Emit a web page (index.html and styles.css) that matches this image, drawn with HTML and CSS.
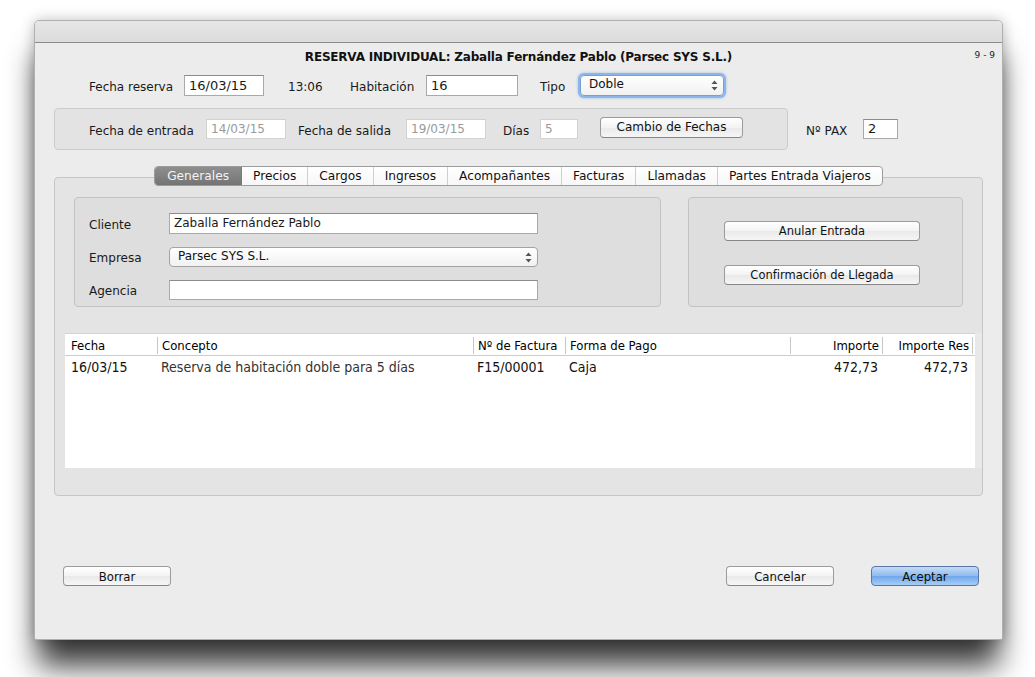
FILE: index.html
```html
<!DOCTYPE html>
<html lang="es">
<head>
<meta charset="utf-8">
<title>Reserva individual</title>
<link rel="stylesheet" href="styles.css">
</head>
<body>
<div class="window">
  <div class="titlebar"></div>
  <div class="title-row">
    <span></span>
    <h1 class="title">RESERVA INDIVIDUAL: Zaballa Fernández Pablo (Parsec SYS S.L.)</h1>
    <span class="pager">9 - 9</span>
  </div>
  <div class="body">
    <div class="row row1">
      <span class="lbl w95">Fecha reserva</span>
      <div class="field w80">16/03/15</div>
      <span class="lbl time w62">13:06</span>
      <span class="lbl w76">Habitación</span>
      <div class="field w92">16</div>
      <span class="lbl tipo w40">Tipo</span>
      <div class="popup focus w144"><span class="ptext">Doble</span><svg class="arrows" width="7" height="11" viewBox="0 0 7 11"><path d="M3.5 0.5 L6.5 4 L0.5 4 Z M3.5 10.5 L6.5 7 L0.5 7 Z" fill="#555"/></svg></div>
    </div>

    <div class="row row2">
      <div class="group dates">
        <span class="lbl w117">Fecha de entrada</span>
        <div class="field disabled w80">14/03/15</div>
        <span class="lbl gap12 w108">Fecha de salida</span>
        <div class="field disabled w80">19/03/15</div>
        <span class="lbl gap17 w37">Días</span>
        <div class="field disabled w38">5</div>
        <button class="btn cambio">Cambio de Fechas</button>
      </div>
      <span class="lbl pax w57">Nº PAX</span>
      <div class="field w35">2</div>
    </div>

    <div class="tabview">
      <div class="tabs">
        <span class="tab active">Generales</span>
        <span class="tab">Precios</span>
        <span class="tab">Cargos</span>
        <span class="tab">Ingresos</span>
        <span class="tab">Acompañantes</span>
        <span class="tab">Facturas</span>
        <span class="tab">Llamadas</span>
        <span class="tab">Partes Entrada Viajeros</span>
      </div>
      <div class="tabbox">
        <div class="groups">
          <div class="group client">
            <div class="crow r1"><span class="lbl w80">Cliente</span><div class="field w369 h21">Zaballa Fernández Pablo</div></div>
            <div class="crow r2"><span class="lbl w80">Empresa</span><div class="popup w369"><span class="ptext">Parsec SYS S.L.</span><svg class="arrows" width="7" height="11" viewBox="0 0 7 11"><path d="M3.5 0.5 L6.5 4 L0.5 4 Z M3.5 10.5 L6.5 7 L0.5 7 Z" fill="#555"/></svg></div></div>
            <div class="crow r3"><span class="lbl w80">Agencia</span><div class="field w369"></div></div>
          </div>
          <div class="group actions">
            <button class="btn wide">Anular Entrada</button>
            <button class="btn wide second">Confirmación de Llegada</button>
          </div>
        </div>

        <div class="tablewrap">
          <div class="table">
            <div class="thead">
              <span class="c1">Fecha</span>
              <span class="c2">Concepto</span>
              <span class="c3">Nº de Factura</span>
              <span class="c4">Forma de Pago</span>
              <span class="c5 num">Importe</span>
              <span class="c6 num">Importe Res</span>
              <span class="c7"></span>
            </div>
            <div class="trow">
              <span class="c1">16/03/15</span>
              <span class="c2 concept">Reserva de habitación doble para 5 días</span>
              <span class="c3">F15/00001</span>
              <span class="c4">Caja</span>
              <span class="c5 num">472,73</span>
              <span class="c6 num">472,73</span>
              <span class="c7"></span>
            </div>
          </div>
          <div class="scrollstrip"></div>
        </div>
      </div>
    </div>

    <div class="footer">
      <button class="btn foot borrar">Borrar</button>
      <button class="btn foot cancelar">Cancelar</button>
      <button class="btn foot default">Aceptar</button>
    </div>
  </div>
</div>
</body>
</html>
```

FILE: styles.css
```css
html, body {
  margin: 0;
  padding: 0;
  background: #ffffff;
}
body {
  box-sizing: border-box;
  height: 677px;
  padding: 20px 0 0 34px;
  font-family: "DejaVu Sans", "Liberation Sans", sans-serif;
  font-size: 12px;
  color: #1a1a1a;
  overflow: hidden;
}

.window {
  width: 969px;
  height: 620px;
  box-sizing: border-box;
  background: #ececec;
  border: 1px solid #b0b0b0;
  border-radius: 5px 5px 2px 2px;
  box-shadow: 0 30px 30px -4px rgba(0, 0, 0, 0.78), 0 0 14px rgba(0, 0, 0, 0.25);
  overflow: hidden;
}

.titlebar {
  height: 21px;
  background: linear-gradient(#e6e6e6, #dcdcdc);
  border-bottom: 1px solid #8a8a8a;
}

.title-row {
  display: grid;
  grid-template-columns: 1fr auto 1fr;
  align-items: center;
  height: 28px;
  padding: 0 7px;
}
.title {
  margin: 0;
  font-size: 12px;
  font-weight: bold;
  letter-spacing: -0.2px;
  color: #111;
}
.pager {
  justify-self: end;
  font-size: 9px;
  color: #222;
  margin-top: -4px;
}

.body {
  padding: 0 19px;
}

.row {
  display: flex;
  align-items: center;
}
.row1 {
  margin-top: 3px;
  height: 22px;
  padding-left: 35px;
}

.lbl {
  flex: none;
  white-space: nowrap;
}
.row .lbl { margin-top: 4px; }
.w95 { width: 95px; }
.w62 { width: 62px; }
.w76 { width: 76px; }
.w40 { width: 40px; }
.w117 { width: 117px; }
.w108 { width: 108px; }
.w37 { width: 37px; }
.w57 { width: 57px; }
.w80 { width: 80px; }
.time { margin-left: 24px; }
.tipo { margin-left: 22px; }
.gap12 { margin-left: 12px; }
.gap17 { margin-left: 17px; }

.field {
  flex: none;
  box-sizing: border-box;
  height: 20px;
  background: #fff;
  border: 1px solid #a9a9a9;
  border-top-color: #8c8c8c;
  padding: 0 4px;
  line-height: 18px;
  font-size: 13px;
  white-space: nowrap;
  overflow: hidden;
}
.row1 .field { height: 21px; line-height: 20px; }
.field.w80 { width: 80px; }
.w92 { width: 92px; }
.w38 { width: 38px; }
.w35 { width: 35px; }
.w369 { width: 369px; }
.field.h21 { height: 21px; line-height: 19px; }
.field.disabled {
  color: #9a9a9a;
  border-color: #d2d2d2;
  font-size: 12px;
}

.popup {
  flex: none;
  box-sizing: border-box;
  height: 20px;
  display: flex;
  justify-content: space-between;
  align-items: center;
  padding: 0 5px 0 8px;
  background: linear-gradient(#ffffff, #f1f1f1);
  border: 1px solid #a3a3a3;
  border-radius: 4px;
  font-size: 12px;
  color: #111;
}
.ptext { margin-top: -2px; }
.popup.focus {
  height: 21px;
  border-color: #7a9fd3;
  box-shadow: 0 0 0 2px #8cb5ea, 0 0 3px 2px rgba(110, 160, 225, 0.6);
}
.w144 { width: 144px; }
.arrows {
  flex: none;
  display: block;
}

.row2 {
  margin-top: 12px;
}
.group {
  box-sizing: border-box;
  background: #e3e3e3;
  border: 1px solid #cbcbcb;
  border-radius: 4px;
}
.dates {
  width: 734px;
  height: 42px;
  display: flex;
  align-items: center;
  padding-left: 34px;
}
.pax { margin-left: 18px; }

.btn {
  flex: none;
  box-sizing: border-box;
  height: 20px;
  padding: 0;
  font-family: "DejaVu Sans", "Liberation Sans", sans-serif;
  font-size: 12px;
  color: #111;
  background: linear-gradient(#ffffff, #f3f3f3 50%, #e9e9e9 51%, #f6f6f6);
  border: 1px solid #9b9b9b;
  border-bottom-color: #868686;
  border-radius: 4px;
  line-height: 17px;
}
.cambio {
  width: 143px;
  height: 21px;
  margin-left: 22px;
  margin-top: -3px;
}

.tabview {
  margin-top: 16px;
}
.tabs {
  position: relative;
  z-index: 1;
  display: flex;
  width: max-content;
  height: 20px;
  margin: 0 auto;
  box-sizing: border-box;
  border: 1px solid #9c9c9c;
  border-radius: 4px;
  background: linear-gradient(#ffffff, #f7f7f7);
  overflow: hidden;
}
.tab {
  box-sizing: border-box;
  height: 18px;
  padding: 0 11px;
  line-height: 19px;
  font-size: 12.2px;
  border-left: 1px solid #cfcfcf;
  color: #111;
  white-space: nowrap;
}
.tab:first-child { border-left: none; }
.tab.active {
  background: linear-gradient(#8e8e8e, #747474);
  color: #f4f4f4;
  padding: 0 12px;
}
.tab.active + .tab { border-left-color: #7a7a7a; }

.tabbox {
  margin-top: -9px;
  box-sizing: border-box;
  height: 319px;
  background: #e4e4e4;
  border: 1px solid #c6c6c6;
  border-radius: 4px;
  padding: 19px 0 0 10px;
}
.groups {
  display: flex;
  gap: 27px;
  margin-left: 9px;
}
.client {
  width: 587px;
  height: 110px;
  background: #dedede;
  border-color: #c3c3c3;
  padding: 15px 0 0 14px;
}
.crow {
  display: flex;
  align-items: center;
  height: 21px;
}
.crow .lbl { margin-top: 2px; }
.crow.r2 { margin-top: 13px; height: 20px; }
.crow.r3 { margin-top: 13px; height: 20px; }
.client .lbl { font-size: 12px; }
.client .field { font-size: 12px; }

.actions {
  width: 275px;
  height: 110px;
  background: #dedede;
  border-color: #c3c3c3;
  padding: 23px 0 0 35px;
  display: flex;
  flex-direction: column;
  gap: 24px;
}
.btn.wide {
  width: 196px;
  height: 20px;
  font-size: 11.5px;
}

.tablewrap {
  display: flex;
  margin-top: 26px;
  height: 135px;
}
.table {
  width: 910px;
  background: #fff;
  border-top: 1px solid #d4d4d4;
}
.scrollstrip {
  width: 7px;
  background: #e9e9e9;
}
.thead, .trow {
  display: grid;
  grid-template-columns: 92px 316px 92px 225px 92px 90px 3px;
}
.thead {
  height: 21px;
  border-bottom: 1px solid #cccccc;
  font-family: "DejaVu Sans Condensed", "DejaVu Sans", sans-serif;
  font-stretch: condensed;
  font-size: 13px;
  color: #000;
}
.thead span {
  border-left: 1px solid #c8c8c8;
  padding: 0 4px;
  margin: 3px 0;
  line-height: 17px;
  white-space: nowrap;
}
.thead span.c1 { border-left: none; padding-left: 6px; }
.thead span.num { padding-right: 3px; }
.trow {
  height: 22px;
  line-height: 23px;
  font-size: 14px;
  font-family: "DejaVu Sans Condensed", "DejaVu Sans", sans-serif;
  font-stretch: condensed;
  color: #111;
}
.trow span { padding: 0 4px; white-space: nowrap; }
.trow span.c1 { padding-left: 6px; }
.trow .concept { color: #333; }
.num { text-align: right; }
.trow .num { padding-right: 4px; }

.footer {
  display: flex;
  margin-top: 70px;
  padding: 0 4px 0 9px;
}
.btn.foot {
  width: 108px;
  height: 20px;
  font-family: "DejaVu Sans Condensed", "DejaVu Sans", sans-serif;
  font-stretch: condensed;
  font-size: 13px;
}
.cancelar { margin-left: auto; }
.btn.default {
  margin-left: 37px;
  background: linear-gradient(#c4dcf7, #8ebbef 50%, #6fa6ea 51%, #a7cdf7);
  border-color: #5a75a8;
  color: #0b0b0b;
}
```
